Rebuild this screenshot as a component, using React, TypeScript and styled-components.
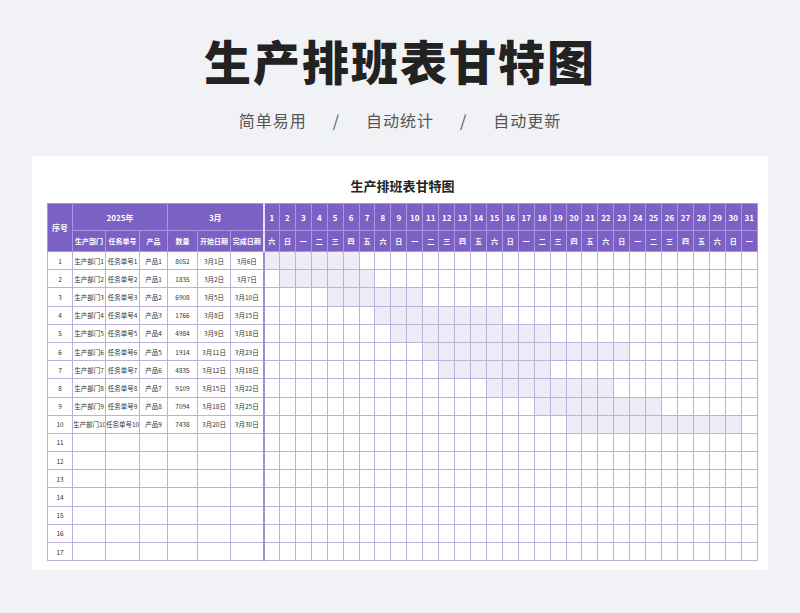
import React from 'react';
import styled, { createGlobalStyle } from 'styled-components';

const GlobalStyle = createGlobalStyle`
  html, body { margin: 0; padding: 0; background: #f1f2f6; }
  body { font-family: "Noto Sans CJK SC", "Noto Sans", sans-serif; }
`;

const Page = styled.div`
  width: 800px;
  height: 613px;
  display: flex;
  flex-direction: column;
  align-items: center;
  box-sizing: border-box;
  padding-top: 28px;
`;

const Title = styled.h1`
  margin: 0;
  font-size: 47px;
  font-weight: 900;
  color: #222;
  letter-spacing: 2px;
  line-height: 64px;
`;

const Subtitle = styled.div`
  margin-top: 16px;
  font-size: 16px;
  color: #555;
  display: flex;
  gap: 26px;
  letter-spacing: 1px;
`;

const Card = styled.div`
  margin-top: 24px;
  width: 736px;
  height: 414px;
  background: #fff;
  box-sizing: border-box;
  padding: 20px 10px 0 15px;
  display: flex;
  flex-direction: column;
  align-items: center;
`;

const CardTitle = styled.div`
  font-size: 13px;
  font-weight: 700;
  color: #222;
  height: 27px;
  line-height: 20px;
`;

const Table = styled.table`
  border-collapse: collapse;
  table-layout: fixed;
  width: 711px;
  font-size: 6.5px;
  color: #333;
`;

const Th = styled.th<{ $h: number; $sep?: boolean }>`
  background: #7a61c3;
  color: #fff;
  height: ${p => p.$h}px;
  padding: 0;
  font-weight: 700;
  border: 1px solid #a995e0;
  border-left: ${p => (p.$sep ? '2px solid #e6e0f6' : '1px solid #a995e0')};
  font-size: ${p => (p.$h > 22 ? 8 : 7)}px;
  white-space: nowrap;
`;

const Td = styled.td<{ $on?: boolean; $sep?: boolean }>`
  height: 17.2px;
  padding: 0;
  text-align: center;
  white-space: nowrap;
  overflow: hidden;
  border: 1px solid #bcb2dc;
  border-left: ${p => (p.$sep ? '2px solid #9d8bd6' : '1px solid #bcb2dc')};
  background: ${p => (p.$on ? '#efebf9' : '#fff')};
`;

const weekdays = ['六', '日', '一', '二', '三', '四', '五'];
const days = Array.from({ length: 31 }, (_, i) => i + 1);

const tasks = [
  [1, 1, 1, 8052, 1, 6],
  [2, 2, 1, 1835, 2, 7],
  [3, 3, 2, 6908, 5, 10],
  [4, 4, 3, 1766, 8, 15],
  [5, 5, 4, 4984, 9, 18],
  [6, 6, 5, 1914, 11, 23],
  [7, 7, 6, 4835, 12, 18],
  [8, 8, 7, 9109, 15, 22],
  [9, 9, 8, 7094, 18, 25],
  [10, 10, 9, 7438, 20, 30],
];

const colWidths = [25, 33, 34, 28, 30, 33, 33];

export default function App() {
  return (
    <Page>
      <GlobalStyle />
      <Title>生产排班表甘特图</Title>
      <Subtitle>
        <span>简单易用</span><span>/</span><span>自动统计</span><span>/</span><span>自动更新</span>
      </Subtitle>
      <Card>
        <CardTitle>生产排班表甘特图</CardTitle>
        <Table>
          <colgroup>
            {colWidths.map((w, i) => <col key={i} style={{ width: w }} />)}
            {days.map(d => <col key={d} />)}
          </colgroup>
          <thead>
            <tr>
              <Th $h={26} rowSpan={2}>序号</Th>
              <Th $h={26} colSpan={3}>2025年</Th>
              <Th $h={26} colSpan={3}>3月</Th>
              {days.map(d => <Th key={d} $h={26} $sep={d === 1}>{d}</Th>)}
            </tr>
            <tr>
              {['生产部门', '任务单号', '产品', '数量', '开始日期', '完成日期'].map(t => (
                <Th key={t} $h={20}>{t}</Th>
              ))}
              {days.map(d => <Th key={d} $h={20} $sep={d === 1}>{weekdays[(d - 1) % 7]}</Th>)}
            </tr>
          </thead>
          <tbody>
            {Array.from({ length: 17 }, (_, i) => {
              const t = tasks[i];
              return (
                <tr key={i}>
                  <Td>{i + 1}</Td>
                  <Td>{t ? `生产部门${t[0]}` : ''}</Td>
                  <Td>{t ? `任务单号${t[1]}` : ''}</Td>
                  <Td>{t ? `产品${t[2]}` : ''}</Td>
                  <Td>{t ? t[3] : ''}</Td>
                  <Td>{t ? `3月${t[4]}日` : ''}</Td>
                  <Td>{t ? `3月${t[5]}日` : ''}</Td>
                  {days.map(d => (
                    <Td key={d} $sep={d === 1} $on={!!t && d >= t[4] && d <= t[5]} />
                  ))}
                </tr>
              );
            })}
          </tbody>
        </Table>
      </Card>
    </Page>
  );
}
